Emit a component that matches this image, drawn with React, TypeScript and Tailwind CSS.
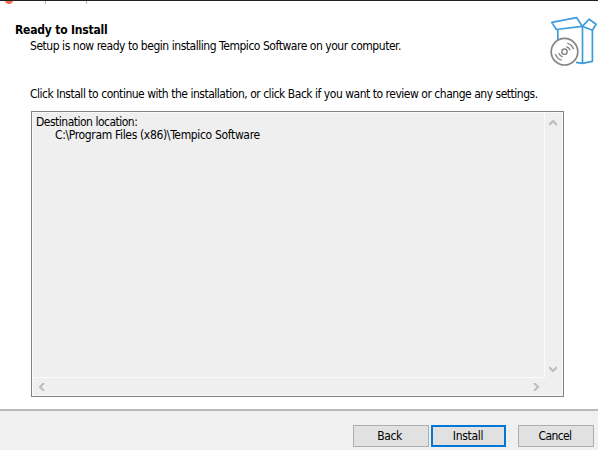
import type { ReactNode } from 'react';

function Chevron({ d }: { d: string }) {
  return (
    <svg viewBox="0 0 8 8" className="size-2" fill="none" stroke="#bcbcbc" strokeWidth="2">
      <path d={d} />
    </svg>
  );
}

function Button({ children, className }: { children: ReactNode; className: string }) {
  return (
    <button className={`flex h-[22px] items-center justify-center bg-[#e1e1e1] text-[12px] leading-none ${className}`}>
      {children}
    </button>
  );
}

function SetupIcon() {
  return (
    <svg width="50" height="54" viewBox="0 0 50 54" fill="none" strokeLinejoin="round">
      <g stroke="#3d9ddb" strokeWidth="1.7">
        <path d="M10.8 24V13.5" />
        <path d="M35.3 10.3L9.3 13.5L4.8 6.4l24.9-4.7Z" />
        <path d="M35.5 10.3V47.3l-6.5-.9" />
        <path d="M35.3 10.3L42.2 3.2l6.9 5.1-3.7 5.9Z" />
        <path d="M45.4 14.2V45.4l-9.9 1.9" />
      </g>
      <g stroke="#858585">
        <circle cx="17.5" cy="35.7" r="13.3" fill="white" strokeWidth="1.7" />
        <circle cx="17.5" cy="35.7" r="2.7" strokeWidth="1.4" />
        <path d="M19.3 30.6q3 .9 3.8 3.7M20.3 27.2q5 1.8 6.2 6.1M15.7 40.8q-3-.9-3.8-3.7M14.7 44.2q-5-1.8-6.2-6.1" strokeWidth="1.4" />
      </g>
    </svg>
  );
}

export default function App() {
  return (
    <main className="flex h-[450px] w-[598px] flex-col overflow-hidden bg-white font-['DejaVu_Sans_Condensed','DejaVu_Sans',sans-serif] text-[12px] leading-[14px] tracking-[-0.46px] text-black">
      <div className="h-1 shrink-0 border-t border-[#211f22] bg-white">
        <svg width="100" height="3">
          <path d="M5 0h8q-1 3-4 3T5 0" fill="#fa6945" />
          <path d="M45.5 0v3M86.5 0v3" stroke="#b8b8c6" />
        </svg>
      </div>
      <header className="flex h-[83px] shrink-0 justify-between pl-[15px] pr-[1px]">
        <div className="pt-[19px]">
          <h1 className="whitespace-nowrap text-[12px] font-bold leading-[15px] tracking-[-0.2px]"><span>Ready to Install</span></h1>
          <p className="ml-[15px] mt-[1px] whitespace-nowrap"><span>Setup is now ready to begin installing Tempico Software on your computer.</span></p>
        </div>
        <div className="pt-[12px]"><SetupIcon /></div>
      </header>
      <p className="ml-[30px] h-6 shrink-0 whitespace-nowrap tracking-[-0.48px]"><span>Click Install to continue with the installation, or click Back if you want to review or change any settings.</span></p>
      <section className="ml-[31px] grid h-[286px] w-[533px] shrink-0 grid-cols-[1fr_18px] grid-rows-[1fr_18px] border border-[#828282] bg-[#efefef] shadow-[inset_0_0_0_1px_#f9f9f9]">
        <div className="border-r border-b border-[#fafafa] pl-1 pt-[3px]">
          <p className="tracking-[-0.5px]"><span>Destination location:</span></p>
          <p className="ml-[19px] leading-[13px] tracking-[-0.34px]"><span>C:\Program Files (x86)\Tempico Software</span></p>
        </div>
        <div className="flex flex-col items-center justify-between pb-[5px] pr-[2px] pt-[7px]">
          <Chevron d="M0 6l4-4 4 4" />
          <Chevron d="M0 2l4 4 4-4" />
        </div>
        <div className="flex items-center justify-between pb-px pl-[6px] pr-[5px]">
          <Chevron d="M6 0L2 4l4 4" />
          <Chevron d="M2 0l4 4-4 4" />
        </div>
      </section>
      <footer className="mt-[12px] flex h-[41px] shrink-0 border-t-2 border-[#b9b9b9] bg-[#f0f0f0] pl-[353px] pt-[14px]">
        <Button className="w-[76px] border border-[#adadad] pr-[3px]">Back</Button>
        <Button className="ml-[2px] w-[75px] border-2 border-[#0078d7] pr-px tracking-[-0.3px]">Install</Button>
        <Button className="ml-[12px] w-[76px] border border-[#adadad] pr-[2px] tracking-[-0.6px]">Cancel</Button>
      </footer>
    </main>
  );
}
